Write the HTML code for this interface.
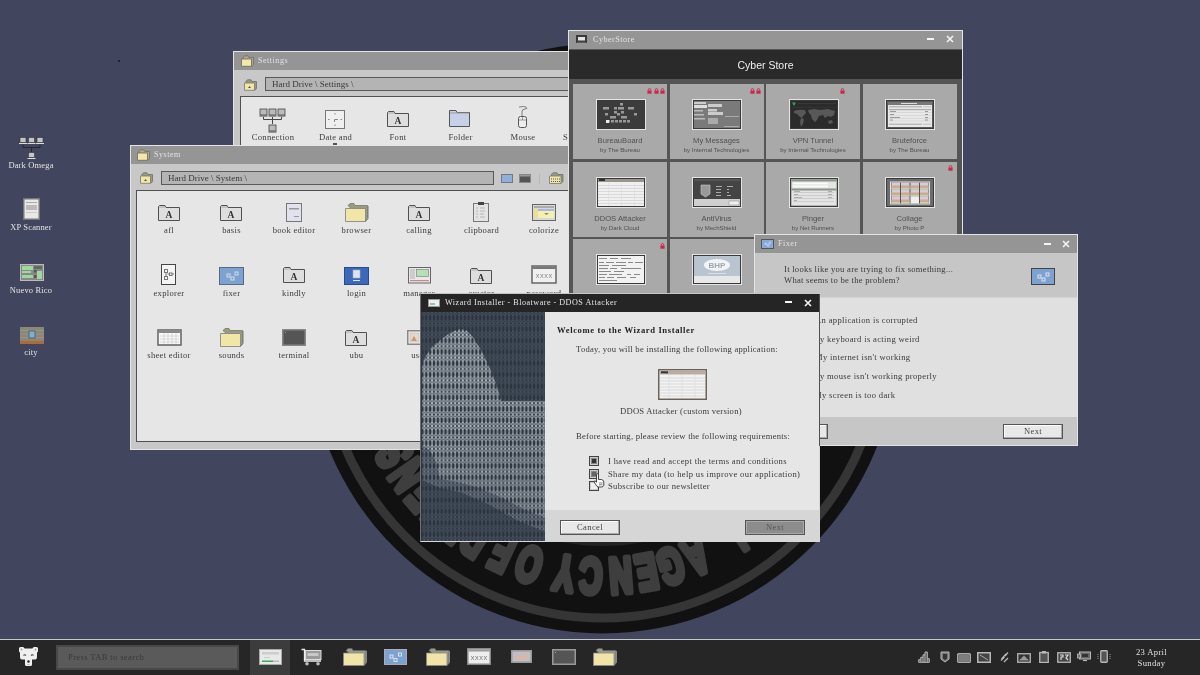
<!DOCTYPE html>
<html><head><meta charset="utf-8">
<style>
*{box-sizing:border-box;margin:0;padding:0}
html,body{width:1200px;height:675px;overflow:hidden}
.win,.abs{will-change:transform}
body{position:relative;background:#42455e;font-family:"Liberation Serif",serif;font-size:8.6px;color:#3a3a3a}
.abs{position:absolute}
.win{position:absolute;background:#c8c8c8;border:1px solid #e4e4e4;overflow:hidden}
.tb{position:absolute;left:0;right:0;top:0;height:18px;background:#959595}
.ttl{position:absolute;top:3px;color:#e2e2e2;font-size:8.1px;letter-spacing:0.5px;line-height:12px;white-space:nowrap}
.content{position:absolute;background:#e6e6e6;border:1px solid #505050}
.path{position:absolute;background:#b4b4b4;border:1px solid #5a5a5a;font-size:9px;color:#3a3a3a;padding-left:6px;line-height:12px}
.lbl{position:absolute;width:80px;text-align:center;font-size:8.6px;color:#3c3c3c;letter-spacing:0.3px;line-height:12px;white-space:nowrap}
.dl{color:#e4e4e4;letter-spacing:0.15px;font-size:8.5px}
.content > svg{margin-left:-1px;margin-top:-1.5px}
.content .lbl{margin-top:-1.5px}
#setc > svg{margin-top:0}
#setc .lbl{margin-top:-0.3px}
.card{position:absolute;width:94px;height:75px;background:#a9a9a9}
.card .t{position:absolute;left:0;right:0;top:51px;line-height:12px;text-align:center;font-family:"Liberation Sans",sans-serif;font-size:7.6px;color:#505050}
.card .s{position:absolute;left:0;right:0;top:61px;line-height:10px;text-align:center;font-family:"Liberation Sans",sans-serif;font-size:6.1px;color:#505050}
.btn{position:absolute;border:1px solid #555;background:#e8e8e8;box-shadow:inset -1px -1px 0 #aaa, inset 1px 1px 0 #fff;text-align:center;line-height:13px;font-size:8.5px;color:#444;letter-spacing:0.4px}
.thumb{position:absolute;left:22.5px;top:15px;width:50px;height:31px;border:1px solid #e4e4e4}
.thumb svg{outline:1px solid #3a3a3a;outline-offset:-1px}
</style></head>
<body>
<!-- logo -->
<svg class="abs" style="left:0;top:0" width="1200" height="675">
  <circle cx="602.5" cy="338.5" r="295" fill="#111"/>
  <circle cx="602.5" cy="338.5" r="279.5" fill="none" stroke="#353535" stroke-width="9"/>
  <circle cx="603" cy="338.5" r="205" fill="none" stroke="#232323" stroke-width="5"/>
  <g style="fill:#3e3e3e;font-family:'Liberation Sans';font-weight:700;font-size:50px;stroke:#3e3e3e;stroke-width:6.5px;stroke-linejoin:round" text-anchor="middle">
<text transform="translate(722.9 523.2) rotate(146.9) scale(0.64 1)">L</text>
<text transform="translate(689.7 541.0) rotate(156.7) scale(0.64 1)">A</text>
<text transform="translate(665.9 549.7) rotate(163.3) scale(0.64 1)">G</text>
<text transform="translate(643.4 555.2) rotate(169.3) scale(0.64 1)">E</text>
<text transform="translate(619.4 558.4) rotate(175.6) scale(0.64 1)">N</text>
<text transform="translate(591.7 558.7) rotate(182.8) scale(0.64 1)">C</text>
<text transform="translate(567.2 556.2) rotate(189.2) scale(0.64 1)">Y</text>
<text transform="translate(534.4 548.2) rotate(198.0) scale(0.64 1)">O</text>
<text transform="translate(509.3 538.3) rotate(205.0) scale(0.64 1)">F</text>
<text transform="translate(484.0 524.5) rotate(212.5) scale(0.64 1)">D</text>
<text transform="translate(466.7 512.3) rotate(218.0) scale(0.64 1)">E</text>
<text transform="translate(451.3 499.0) rotate(223.3) scale(0.64 1)">F</text>
<text transform="translate(436.8 484.0) rotate(228.7) scale(0.64 1)">E</text>
<text transform="translate(422.1 465.3) rotate(234.9) scale(0.64 1)">N</text>
<text transform="translate(409.6 445.4) rotate(241.0) scale(0.64 1)">S</text>
<text transform="translate(399.5 424.7) rotate(247.0) scale(0.64 1)">E</text>
</g>
</svg>

<!-- desktop icons -->
<div class="abs" style="left:118px;top:59.5px;width:1.5px;height:1.5px;background:#222"></div>
<svg class="abs" style="left:19px;top:137px" width="25" height="23"><g fill="#c4c4c4" stroke="#333" stroke-width="0.6"><rect x="1" y="0.5" width="6" height="5"/><rect x="9.5" y="0.5" width="6" height="5"/><rect x="18" y="0.5" width="6" height="5"/><rect x="9.5" y="15.5" width="6" height="5"/></g><path d="M0 6.5H8M8.5 6.5H16.5M17 6.5H25M8.5 21.5H16.5" stroke="#ddd" stroke-width="1"/><path d="M4 7.5V10.5H21V7.5M12.5 10.5V15" stroke="#222" fill="none" stroke-width="0.8"/></svg>
<div class="lbl dl" style="left:-9px;top:159px">Dark Omega</div>
<svg class="abs" style="left:23px;top:198px" width="17" height="22"><rect x="0.75" y="0.75" width="15.5" height="20.5" fill="#e8e8e8" stroke="#777" stroke-width="1.5"/><rect x="3" y="4" width="11" height="1" fill="#aaa"/><rect x="3" y="7" width="11" height="5" fill="#bbb"/><rect x="3" y="14" width="11" height="1" fill="#ccc"/></svg>
<div class="lbl dl" style="left:-9px;top:221px">XP Scanner</div>
<svg class="abs" style="left:20px;top:264px" width="24" height="17"><rect x="0.5" y="0.5" width="23" height="16" fill="#888" stroke="#bbb"/><rect x="2" y="2" width="11" height="4" fill="#9ed89e"/><rect x="2" y="7" width="9" height="2" fill="#9ed89e"/><rect x="2" y="11" width="11" height="3" fill="#9ed89e"/><rect x="14" y="2" width="8" height="3" fill="#666"/><rect x="14" y="6" width="2.5" height="2.5" fill="#555"/><rect x="17" y="7" width="5" height="8" fill="#9ed89e"/><rect x="14" y="11" width="2.5" height="3" fill="#555"/></svg>
<div class="lbl dl" style="left:-9px;top:284px">Nuevo Rico</div>
<svg class="abs" style="left:20px;top:327px" width="24" height="17"><rect width="24" height="14" fill="#8a8878"/><path d="M0 3.5H24M0 7H24M0 10.5H24" stroke="#9a9888" stroke-width="0.8"/><rect y="14" width="24" height="3" fill="#b06a3a"/><rect x="9" y="4" width="6" height="7" fill="#7ab0d8" stroke="#555" stroke-width="0.8"/></svg>
<div class="lbl dl" style="left:-9px;top:346px">city</div>

<!-- Settings window -->
<div class="win" style="left:233px;top:51px;width:400px;height:200px">
  <div class="tb"></div>
  <svg class="abs" style="left:7px;top:3px" width="14" height="12"><path d="M1.5 3 L3.5 0.8 H7 L8 2.5 H12.5 V9.5 L11 11.3 Z" fill="#b0aa88" stroke="#666" stroke-width="0.7"/><path d="M0.5 4 H10.5 V11.3 H0.5 Z" fill="#f4e8a8" stroke="#666" stroke-width="0.8"/></svg>
  <div class="ttl" style="left:24px">Settings</div>
  <svg class="abs" style="left:10px;top:27px" width="14" height="12"><path d="M1.5 3 L3.5 0.8 H7 L8 2.5 H12.5 V9.5 L11 11.3 Z" fill="#9a9a80" stroke="#666" stroke-width="0.7"/><path d="M0.5 4 H10.5 V11.3 H0.5 Z" fill="#f2e6a6" stroke="#777" stroke-width="0.8"/><path d="M4 9 L5.5 7 L7 9Z" fill="#555"/></svg>
  <div class="path" style="left:31px;top:25px;width:360px;height:14px">Hard Drive \ Settings \</div>
  <div class="content" id="setc" style="left:6px;top:44px;width:330px;height:160px"><svg class="abs" style="left:19px;top:11px" width="27" height="25"><g fill="#bbb" stroke="#444" stroke-width="0.8"><rect x="1" y="1" width="7" height="6"/><rect x="10" y="1" width="7" height="6"/><rect x="19" y="1" width="7" height="6"/><rect x="10" y="17" width="7" height="6"/></g><path d="M0.5 8H8.5M9.5 8H17.5M18.5 8H26.5M9.5 24H17.5" stroke="#444"/><path d="M4.5 9V11.5H22.5V9M13.5 9V16" stroke="#444" fill="none"/></svg><svg class="abs" style="left:85px;top:13px" width="20" height="19"><rect x="0.5" y="0.5" width="19" height="18" fill="#f0f0f0" stroke="#777"/><path d="M10 3V4.5M10 14.5V16M3 9.5H4.5M15.5 9.5H17M9.5 9.5V12M9.5 9.5H13" stroke="#888"/></svg><svg class="abs" style="left:147px;top:13px" width="22" height="17"><path d="M0.5 2.5 V16.5 H21.5 V3.5 H8 L7 1.5 H1.5 Z" fill="#dedede" stroke="#505050"/><path d="M1 3 H7.5" stroke="#aaa"/><text x="11" y="13.5" text-anchor="middle" font-family="Liberation Serif" font-weight="bold" font-size="9.5" fill="#333">A</text></svg><svg class="abs" style="left:209px;top:12px" width="21" height="18"><path d="M0.5 1.5 H7 L8 3.5 H20.5 V17.5 H0.5 Z" fill="#c8d0e8" stroke="#555"/><path d="M1 4H20" stroke="#999"/></svg><svg class="abs" style="left:276px;top:9px" width="13" height="22"><path d="M6 10 V6 Q6 3 9 3 Q12 3 10 1 Q8 0 3 1" stroke="#666" fill="none" stroke-width="0.8"/><rect x="2.5" y="10.5" width="8" height="11" rx="2" fill="#eee" stroke="#555"/><path d="M6.5 11V14M3 14H10" stroke="#777" stroke-width="0.7"/></svg><div class="lbl" style="left:-8px;top:34px">Connection</div><div class="lbl" style="left:54.5px;top:34px">Date and</div><div class="lbl" style="left:117px;top:34px">Font</div><div class="lbl" style="left:179.5px;top:34px">Folder</div><div class="lbl" style="left:242px;top:34px">Mouse</div><div class="lbl" style="left:304.5px;top:34px">Screensaver</div><div class="abs" style="left:92px;top:46px;width:4px;height:2px;background:#555"></div></div>
</div>

<!-- System window -->
<div class="win" style="left:130px;top:145px;width:439px;height:305px">
  <div class="tb"></div>
  <svg class="abs" style="left:6px;top:3px" width="14" height="12"><path d="M1.5 3 L3.5 0.8 H7 L8 2.5 H12.5 V9.5 L11 11.3 Z" fill="#b0aa88" stroke="#666" stroke-width="0.7"/><path d="M0.5 4 H10.5 V11.3 H0.5 Z" fill="#f4e8a8" stroke="#666" stroke-width="0.8"/></svg>
  <div class="ttl" style="left:23px">System</div>
  <svg class="abs" style="left:9px;top:26px" width="14" height="12"><path d="M1.5 3 L3.5 0.8 H7 L8 2.5 H12.5 V9.5 L11 11.3 Z" fill="#9a9a80" stroke="#666" stroke-width="0.7"/><path d="M0.5 4 H10.5 V11.3 H0.5 Z" fill="#f2e6a6" stroke="#777" stroke-width="0.8"/><path d="M4 9 L5.5 7 L7 9Z" fill="#555"/></svg>
  <div class="path" style="left:30px;top:25px;width:333px;height:14px">Hard Drive \ System \</div>
  <svg class="abs" style="left:369.5px;top:27.5px" width="12" height="9"><rect x="0.5" y="0.5" width="11" height="8" fill="#8fb0dc" stroke="#777"/></svg>
  <svg class="abs" style="left:388px;top:27.5px" width="12" height="9"><rect x="0.5" y="0.5" width="11" height="8" fill="#555" stroke="#888"/><rect x="1" y="1" width="10" height="1.5" fill="#999"/></svg>
  <div class="abs" style="left:408px;top:28px;width:1px;height:10px;background:#b8b8b8"></div>
  <svg class="abs" style="left:418px;top:26px" width="15" height="12"><path d="M2 3 L4 0.8 H8 L9 2.5 H14 V9.5 L12 11.5 Z" fill="#9a9a80" stroke="#666" stroke-width="0.7"/><path d="M0.5 4 H12 V11.5 H0.5 Z" fill="#f2e6a6" stroke="#777" stroke-width="0.8"/><path d="M2 7H11M2 9.5H11" stroke="#555" stroke-dasharray="1 1"/></svg>
  <div class="content" style="left:5px;top:44px;width:440px;height:252px"><svg class="abs" style="left:22px;top:14px" width="22" height="17"><path d="M0.5 2.5 V16.5 H21.5 V3.5 H8 L7 1.5 H1.5 Z" fill="#dedede" stroke="#505050"/><path d="M1 3 H7.5" stroke="#aaa"/><text x="11" y="13.5" text-anchor="middle" font-family="Liberation Serif" font-weight="bold" font-size="9.5" fill="#333">A</text></svg><svg class="abs" style="left:84px;top:14px" width="22" height="17"><path d="M0.5 2.5 V16.5 H21.5 V3.5 H8 L7 1.5 H1.5 Z" fill="#dedede" stroke="#505050"/><path d="M1 3 H7.5" stroke="#aaa"/><text x="11" y="13.5" text-anchor="middle" font-family="Liberation Serif" font-weight="bold" font-size="9.5" fill="#333">A</text></svg><svg class="abs" style="left:150px;top:13px" width="16" height="19"><rect x="0.5" y="0.5" width="15" height="18" fill="#e2e2ee" stroke="#777"/><rect x="3" y="5" width="10" height="1.5" fill="#999"/><rect x="8" y="13" width="5" height="1" fill="#999"/></svg><svg class="abs" style="left:209px;top:13px" width="24" height="19"><path d="M3 2.5 L5 0.5 H9 L10 2.5 H22.5 V15 L20 18.5 Z" fill="#9a9a80" stroke="#777" stroke-width="0.8"/><path d="M0.5 5.5 H20.5 V18.5 H0.5 Z" fill="#f2e6a6" stroke="#888" stroke-width="0.9"/><path d="M20.5 18.5 L23 15.5 V3" stroke="#777" fill="none"/></svg><svg class="abs" style="left:272px;top:14px" width="22" height="17"><path d="M0.5 2.5 V16.5 H21.5 V3.5 H8 L7 1.5 H1.5 Z" fill="#dedede" stroke="#505050"/><path d="M1 3 H7.5" stroke="#aaa"/><text x="11" y="13.5" text-anchor="middle" font-family="Liberation Serif" font-weight="bold" font-size="9.5" fill="#333">A</text></svg><svg class="abs" style="left:337px;top:12px" width="17" height="20"><rect x="0.5" y="1.5" width="15" height="18" fill="#e4e4e4" stroke="#777"/><rect x="5" y="0" width="6" height="3" fill="#444"/><path d="M3 6H5M7 6H12M3 9H5M7 9H12M3 12H5M7 12H11M3 15H5M7 15H12" stroke="#aaa" stroke-width="0.8"/></svg><svg class="abs" style="left:396px;top:14px" width="24" height="17"><rect x="0.5" y="0.5" width="23" height="16" fill="#d8d8d8" stroke="#666"/><rect x="2" y="2" width="20" height="2" fill="#aaa"/><rect x="2" y="5" width="3" height="9" fill="#f0e080"/><rect x="6" y="5" width="16" height="9" fill="#f4f0b0"/><rect x="6" y="5" width="16" height="2" fill="#a8b8e0"/><path d="M12 9 H17 L14.5 11 Z" fill="#888"/></svg><svg class="abs" style="left:25px;top:74px" width="16" height="22"><rect x="0.5" y="0.5" width="14" height="20" fill="#f4f4f4" stroke="#444"/><rect x="3.5" y="5.5" width="3" height="3" fill="none" stroke="#777"/><rect x="3.5" y="12.5" width="3" height="3" fill="none" stroke="#777"/><rect x="8.5" y="9" width="2.5" height="2.5" fill="none" stroke="#777"/><path d="M5 8.5 V12.5 M6.5 10 H8.5 M11 10 H13" stroke="#777"/></svg><svg class="abs" style="left:83px;top:77px" width="25" height="18"><rect x="0.5" y="0.5" width="24" height="17" fill="#7ea2d0" stroke="#5a6a80"/><rect x="8" y="7" width="3" height="3" fill="none" stroke="#dde" stroke-width="0.9"/><rect x="12" y="10" width="3" height="3" fill="none" stroke="#dde" stroke-width="0.9"/><rect x="16" y="5" width="3" height="3" fill="none" stroke="#dde" stroke-width="0.9"/></svg><svg class="abs" style="left:147px;top:76px" width="22" height="17"><path d="M0.5 2.5 V16.5 H21.5 V3.5 H8 L7 1.5 H1.5 Z" fill="#dedede" stroke="#505050"/><path d="M1 3 H7.5" stroke="#aaa"/><text x="11" y="13.5" text-anchor="middle" font-family="Liberation Serif" font-weight="bold" font-size="9.5" fill="#333">A</text></svg><svg class="abs" style="left:208px;top:77px" width="25" height="18"><rect x="0.5" y="0.5" width="24" height="17" fill="#3c68bc" stroke="#2a4a88"/><rect x="9" y="3" width="7" height="8" fill="#dde3ee" stroke="#aab" stroke-width="0.6"/><rect x="9" y="13" width="7" height="1" fill="#dde3ee"/></svg><svg class="abs" style="left:272px;top:77px" width="23" height="17"><rect x="0.5" y="0.5" width="22" height="15.5" fill="#e8e8e8" stroke="#666"/><rect x="2" y="2" width="5" height="10" fill="#ccc"/><rect x="8.5" y="2.5" width="12" height="7" fill="#b8e0b8" stroke="#777" stroke-width="0.6"/><rect x="2" y="13" width="19" height="1.2" fill="#c88"/></svg><svg class="abs" style="left:334px;top:77px" width="22" height="17"><path d="M0.5 2.5 V16.5 H21.5 V3.5 H8 L7 1.5 H1.5 Z" fill="#dedede" stroke="#505050"/><path d="M1 3 H7.5" stroke="#aaa"/><text x="11" y="13.5" text-anchor="middle" font-family="Liberation Serif" font-weight="bold" font-size="9.5" fill="#333">A</text></svg><svg class="abs" style="left:395px;top:75px" width="26" height="19"><rect x="1" y="1" width="24" height="17" fill="#f0f0f0" stroke="#666" stroke-width="1.5"/><rect x="1.5" y="1.5" width="23" height="2.5" fill="#777"/><text x="13" y="13" text-anchor="middle" font-family="Liberation Mono" font-size="7" fill="#888">xxxx</text></svg><svg class="abs" style="left:21px;top:139px" width="25" height="17"><rect x="1" y="1" width="23" height="15" fill="#f8f8f8" stroke="#6a6a6a" stroke-width="1.6"/><rect x="1.5" y="1.5" width="22" height="2.5" fill="#888"/><path d="M3 7H22M3 10H22M3 13H22M7 4V15M11 4V15M15 4V15M19 4V15" stroke="#ccc" stroke-width="0.7"/></svg><svg class="abs" style="left:84px;top:138px" width="24" height="19"><path d="M3 2.5 L5 0.5 H9 L10 2.5 H22.5 V15 L20 18.5 Z" fill="#9a9a80" stroke="#777" stroke-width="0.8"/><path d="M0.5 5.5 H20.5 V18.5 H0.5 Z" fill="#f2e6a6" stroke="#888" stroke-width="0.9"/><path d="M20.5 18.5 L23 15.5 V3" stroke="#777" fill="none"/></svg><svg class="abs" style="left:146px;top:139px" width="24" height="17"><rect x="0.75" y="0.75" width="22.5" height="15.5" fill="#555" stroke="#888" stroke-width="1.5"/><rect x="3" y="3" width="1" height="1" fill="#999"/></svg><svg class="abs" style="left:209px;top:139px" width="22" height="17"><path d="M0.5 2.5 V16.5 H21.5 V3.5 H8 L7 1.5 H1.5 Z" fill="#dedede" stroke="#505050"/><path d="M1 3 H7.5" stroke="#aaa"/><text x="11" y="13.5" text-anchor="middle" font-family="Liberation Serif" font-weight="bold" font-size="9.5" fill="#333">A</text></svg><svg class="abs" style="left:271px;top:140px" width="22" height="15"><rect x="0.75" y="0.75" width="20.5" height="13.5" fill="#f0f0f0" stroke="#888" stroke-width="1.5"/><rect x="3" y="3" width="9" height="9" fill="#e4d8cc" stroke="#bbb" stroke-width="0.6"/><path d="M4 11L7 6L10 11Z" fill="#d09870"/></svg><div class="lbl" style="left:-8px;top:34.5px">afl</div><div class="lbl" style="left:54.5px;top:34.5px">basis</div><div class="lbl" style="left:117px;top:34.5px">book editor</div><div class="lbl" style="left:179.5px;top:34.5px">browser</div><div class="lbl" style="left:242px;top:34.5px">calling</div><div class="lbl" style="left:304.5px;top:34.5px">clipboard</div><div class="lbl" style="left:367px;top:34.5px">colorize</div><div class="lbl" style="left:-8px;top:97px">explorer</div><div class="lbl" style="left:54.5px;top:97px">fixer</div><div class="lbl" style="left:117px;top:97px">kindly</div><div class="lbl" style="left:179.5px;top:97px">login</div><div class="lbl" style="left:242px;top:97px">manager</div><div class="lbl" style="left:304.5px;top:97px">creator</div><div class="lbl" style="left:367px;top:97px">password</div><div class="lbl" style="left:-8px;top:159.5px">sheet editor</div><div class="lbl" style="left:54.5px;top:159.5px">sounds</div><div class="lbl" style="left:117px;top:159.5px">terminal</div><div class="lbl" style="left:179.5px;top:159.5px">ubu</div><div class="lbl" style="left:242px;top:159.5px">user</div></div>
</div>

<!-- CyberStore -->
<div class="win" style="left:568px;top:30px;width:395px;height:300px;background:#555">
  <div class="tb"></div>
  <svg class="abs" style="left:7px;top:4px" width="11" height="8"><rect x="0" y="0" width="11" height="8" fill="#3a3a3a"/><rect x="2" y="2" width="7" height="3.5" fill="#e4e4e4"/><rect x="1" y="6.8" width="9" height="1" fill="#666"/></svg>
  <div class="ttl" style="left:24px">CyberStore</div>
  <div class="abs" style="left:358px;top:7px;width:7px;height:2px;background:#f4f4f4"></div>
  <svg class="abs" style="left:377px;top:4px" width="8" height="8"><path d="M1 1L7 7M7 1L1 7" stroke="#f4f4f4" stroke-width="1.6"/></svg>
  <div class="abs" style="left:0;right:0;top:19px;height:29px;background:#2a2a2a;color:#eee;font-family:'Liberation Sans',sans-serif;font-size:10.5px;text-align:center;line-height:31px">Cyber Store</div>
  <div class="card" style="left:4px;top:53px"><svg class="abs" style="left:74px;top:3.5px" width="5" height="6"><path d="M1.3 2.6V1.8Q1.3 0.5 2.5 0.5Q3.7 0.5 3.7 1.8V2.6" stroke="#c8284e" stroke-width="0.9" fill="none"/><rect x="0.4" y="2.5" width="4.2" height="3.2" fill="#c8284e"/></svg><svg class="abs" style="left:81px;top:3.5px" width="5" height="6"><path d="M1.3 2.6V1.8Q1.3 0.5 2.5 0.5Q3.7 0.5 3.7 1.8V2.6" stroke="#c8284e" stroke-width="0.9" fill="none"/><rect x="0.4" y="2.5" width="4.2" height="3.2" fill="#c8284e"/></svg><svg class="abs" style="left:87px;top:3.5px" width="5" height="6"><path d="M1.3 2.6V1.8Q1.3 0.5 2.5 0.5Q3.7 0.5 3.7 1.8V2.6" stroke="#c8284e" stroke-width="0.9" fill="none"/><rect x="0.4" y="2.5" width="4.2" height="3.2" fill="#c8284e"/></svg><div class="thumb"><svg width="48" height="29" style="display:block;background:#3c3c3c"><rect x="0.5" y="0.5" width="47" height="28" fill="#3c3c3c" stroke="#888"/><rect x="23" y="3" width="3" height="2.5" fill="#999"/><rect x="6" y="7" width="3" height="2.5" fill="#999"/><rect x="9" y="7" width="3" height="2.5" fill="#999"/><rect x="17" y="7" width="3" height="2.5" fill="#999"/><rect x="21" y="7" width="3" height="2.5" fill="#999"/><rect x="24" y="7" width="3" height="2.5" fill="#999"/><rect x="31" y="7" width="3" height="2.5" fill="#999"/><rect x="34" y="7" width="3" height="2.5" fill="#999"/><rect x="17" y="11" width="3" height="2.5" fill="#999"/><rect x="24" y="11" width="3" height="2.5" fill="#999"/><rect x="8" y="13" width="3" height="2.5" fill="#999"/><rect x="20" y="13" width="3" height="2.5" fill="#999"/><rect x="37" y="13" width="3" height="2.5" fill="#999"/><rect x="13" y="16" width="3" height="2.5" fill="#999"/><rect x="16" y="16" width="3" height="2.5" fill="#999"/><rect x="24" y="16" width="3" height="2.5" fill="#999"/><rect x="27" y="16" width="3" height="2.5" fill="#999"/><rect x="10" y="20" width="3" height="2.5" fill="#999"/><rect x="14" y="20" width="3" height="2.5" fill="#999"/><rect x="18" y="20" width="3" height="2.5" fill="#999"/><rect x="22" y="20" width="3" height="2.5" fill="#999"/><rect x="26" y="20" width="3" height="2.5" fill="#999"/><rect x="30" y="20" width="3" height="2.5" fill="#999"/><rect x="9" y="20" width="3" height="3" fill="#eee"/></svg></div><div class="t">BureauBoard</div><div class="s">by The Bureau</div></div><div class="card" style="left:100.5px;top:53px"><svg class="abs" style="left:80.5px;top:3.5px" width="5" height="6"><path d="M1.3 2.6V1.8Q1.3 0.5 2.5 0.5Q3.7 0.5 3.7 1.8V2.6" stroke="#c8284e" stroke-width="0.9" fill="none"/><rect x="0.4" y="2.5" width="4.2" height="3.2" fill="#c8284e"/></svg><svg class="abs" style="left:86.5px;top:3.5px" width="5" height="6"><path d="M1.3 2.6V1.8Q1.3 0.5 2.5 0.5Q3.7 0.5 3.7 1.8V2.6" stroke="#c8284e" stroke-width="0.9" fill="none"/><rect x="0.4" y="2.5" width="4.2" height="3.2" fill="#c8284e"/></svg><div class="thumb"><svg width="48" height="29" style="display:block;background:#7a7a7a"><rect x="0" y="0" width="48" height="29" fill="#7a7a7a"/><rect x="1" y="2" width="12" height="2" fill="#ccc"/><rect x="1" y="5" width="13" height="3" fill="#ddd"/><rect x="1" y="10" width="9" height="1.5" fill="#bbb"/><rect x="1" y="14" width="10" height="1.5" fill="#bbb"/><rect x="1" y="18" width="11" height="1.5" fill="#bbb"/><rect x="15" y="4" width="14" height="3" fill="#ccc"/><rect x="15" y="9" width="9" height="2.5" fill="#ccc"/><rect x="15" y="12" width="15" height="3" fill="#ccc"/><rect x="15" y="18" width="10" height="6" fill="#aaa"/><rect x="32" y="16" width="14" height="1" fill="#aaa"/><rect x="31" y="26" width="15" height="1" fill="#aaa"/></svg></div><div class="t">My Messages</div><div class="s">by Internal Technologies</div></div><div class="card" style="left:197px;top:53px"><svg class="abs" style="left:74px;top:3.5px" width="5" height="6"><path d="M1.3 2.6V1.8Q1.3 0.5 2.5 0.5Q3.7 0.5 3.7 1.8V2.6" stroke="#c8284e" stroke-width="0.9" fill="none"/><rect x="0.4" y="2.5" width="4.2" height="3.2" fill="#c8284e"/></svg><div class="thumb"><svg width="48" height="29" style="display:block;background:#2d2d2d"><defs><pattern id="dots" width="1.2" height="1.2" patternUnits="userSpaceOnUse"><rect width="0.8" height="0.8" fill="#6a6a6a"/></pattern></defs><rect width="48" height="29" fill="#2b2b2b"/><path d="M2 2.5 H6 L4 6 Z" fill="#3aa05a"/><rect x="8" y="3" width="38" height="0.6" fill="#444"/><rect x="2" y="7" width="44" height="0.6" fill="#3a3a3a"/><path d="M4 11 Q9 9 15 10 L16 13 L13 16 L12 18 L10 17 L7 14 L4 13 Z M11 18 L14 19 L13 24 L11 27 L10 22 Z M18 10 L24 9 L30 10 L38 9 L45 11 L44 15 L41 17 L38 16 L35 18 L33 15 L29 16 L27 20 L25 22 L22 19 L21 15 L19 13 Z M38 21 L42 20 L43 23 L39 24 Z" fill="#585858"/></svg></div><div class="t">VPN Tunnel</div><div class="s">by Internal Technologies</div></div><div class="card" style="left:293.5px;top:53px"><div class="thumb"><svg width="48" height="29" style="display:block;background:#555"><rect width="48" height="29" fill="#5a5a5a"/><rect x="2" y="2" width="44" height="25" fill="#e8e8e8"/><rect x="2" y="2" width="44" height="3" fill="#777"/><rect x="15" y="3" width="16" height="1" fill="#ddd"/><rect x="3" y="6" width="33" height="1.5" fill="#bbb"/><rect x="37" y="6" width="8" height="1.5" fill="#ccc"/><rect x="3" y="9" width="42" height="1.2" fill="#aaa"/><path d="M3 12.5H45M3 15.5H45M3 18.5H45M3 21H45" stroke="#ccc" stroke-width="0.6"/><path d="M4 11.5H10M4 14.5H8M4 17.5H14M4 20H7M39 11.5H42M39 14.5H42M39 17.5H42M39 20H42" stroke="#777" stroke-width="0.7"/><rect x="3" y="23.5" width="33" height="1.5" fill="#bbb"/><rect x="37" y="23.5" width="8" height="1.5" fill="#ccc"/></svg></div><div class="t">Bruteforce</div><div class="s">by The Bureau</div></div><div class="card" style="left:4px;top:130.8px"><div class="thumb"><svg width="48" height="29" style="display:block;background:#f0f0f0"><rect width="48" height="29" fill="#f0f0f0"/><rect width="48" height="4" fill="#9a948a"/><rect x="2" y="1" width="6" height="2" fill="#333"/><rect x="1" y="7" width="46" height="0.7" fill="#cfcfcf"/><rect x="1" y="10" width="46" height="0.7" fill="#cfcfcf"/><rect x="1" y="13" width="46" height="0.7" fill="#cfcfcf"/><rect x="1" y="16" width="46" height="0.7" fill="#cfcfcf"/><rect x="1" y="19" width="46" height="0.7" fill="#cfcfcf"/><rect x="1" y="22" width="46" height="0.7" fill="#cfcfcf"/><rect x="1" y="25" width="46" height="0.7" fill="#cfcfcf"/><rect x="11" y="5" width="0.7" height="23" fill="#ddd"/><rect x="24" y="5" width="0.7" height="23" fill="#ddd"/><rect x="37" y="5" width="0.7" height="23" fill="#ddd"/></svg></div><div class="t">DDOS Attacker</div><div class="s">by Dark Cloud</div></div><div class="card" style="left:100.5px;top:130.8px"><div class="thumb"><svg width="48" height="29" style="display:block;background:#444"><rect width="48" height="29" fill="#444"/><rect width="48" height="3" fill="#555"/><rect y="21" width="48" height="8" fill="#cfcfcf"/><rect x="36" y="23" width="10" height="4" fill="#eee" stroke="#888" stroke-width="0.5"/><path d="M8 7 H17 V16 L12.5 19 L8 16 Z" fill="#999" stroke="#ccc" stroke-width="0.6"/><rect x="23" y="8" width="6" height="1" fill="#aaa"/><rect x="23" y="11" width="5" height="1" fill="#aaa"/><rect x="23" y="14" width="5" height="1" fill="#aaa"/><rect x="23" y="17" width="5" height="1" fill="#aaa"/><rect x="34" y="8" width="6" height="1" fill="#aaa"/><rect x="34" y="11" width="2" height="1" fill="#aaa"/><rect x="34" y="14" width="2" height="1" fill="#aaa"/><rect x="34" y="17" width="4" height="1" fill="#aaa"/></svg></div><div class="t">AntiVirus</div><div class="s">by MechShield</div></div><div class="card" style="left:197px;top:130.8px"><div class="thumb"><svg width="48" height="29" style="display:block;background:#7a8a7a"><rect width="48" height="29" fill="#7f8c7f"/><rect x="1.5" y="1.5" width="45" height="26" fill="#e4e4e4"/><rect x="1.5" y="1.5" width="45" height="2" fill="#889588"/><rect x="3" y="4.5" width="35" height="1.8" fill="#fafafa"/><rect x="3" y="7.5" width="35" height="1.8" fill="#fafafa"/><rect x="1.5" y="10.5" width="45" height="2" fill="#889588"/><path d="M3 14.5H44M3 17.5H44M3 20.5H44M3 23.5H44" stroke="#bbb" stroke-width="0.6"/><path d="M4 13.5H10M4 16.5H8M4 19.5H12M4 22.5H7M38 13.5H42M38 16.5H42M38 19.5H42" stroke="#888" stroke-width="0.6"/></svg></div><div class="t">Pinger</div><div class="s">by Net Runners</div></div><div class="card" style="left:293.5px;top:130.8px"><svg class="abs" style="left:85.5px;top:3.5px" width="5" height="6"><path d="M1.3 2.6V1.8Q1.3 0.5 2.5 0.5Q3.7 0.5 3.7 1.8V2.6" stroke="#c8284e" stroke-width="0.9" fill="none"/><rect x="0.4" y="2.5" width="4.2" height="3.2" fill="#c8284e"/></svg><div class="thumb"><svg width="48" height="29" style="display:block;background:#6a6a6a"><rect width="48" height="29" fill="#6c6c6c"/><rect x="4" y="3.5" width="40" height="23" fill="#e0e0e0"/><rect x="5" y="4.5" width="38" height="21" fill="#555"/><rect x="5.5" y="4.5" width="8.5" height="7" fill="#d4ccd8"/><rect x="5.5" y="7.5" width="8.5" height="2.5" fill="#d0a890"/><rect x="5.5" y="10.0" width="8.5" height="1.5" fill="#c8d0b0"/><rect x="15" y="4.5" width="8.5" height="7" fill="#d4ccd8"/><rect x="15" y="7.5" width="8.5" height="2.5" fill="#d0a890"/><rect x="15" y="10.0" width="8.5" height="1.5" fill="#c8d0b0"/><rect x="24.5" y="4.5" width="8.5" height="7" fill="#d4ccd8"/><rect x="24.5" y="7.5" width="8.5" height="2.5" fill="#d0a890"/><rect x="24.5" y="10.0" width="8.5" height="1.5" fill="#c8d0b0"/><rect x="34" y="4.5" width="8.5" height="7" fill="#d4ccd8"/><rect x="34" y="7.5" width="8.5" height="2.5" fill="#d0a890"/><rect x="34" y="10.0" width="8.5" height="1.5" fill="#c8d0b0"/><rect x="5.5" y="11.5" width="8.5" height="7" fill="#d4ccd8"/><rect x="5.5" y="14.5" width="8.5" height="2.5" fill="#d0a890"/><rect x="5.5" y="17.0" width="8.5" height="1.5" fill="#c8d0b0"/><rect x="15" y="11.5" width="8.5" height="7" fill="#d4ccd8"/><rect x="15" y="14.5" width="8.5" height="2.5" fill="#d0a890"/><rect x="15" y="17.0" width="8.5" height="1.5" fill="#c8d0b0"/><rect x="24.5" y="11.5" width="8.5" height="7" fill="#d4ccd8"/><rect x="24.5" y="14.5" width="8.5" height="2.5" fill="#d0a890"/><rect x="24.5" y="17.0" width="8.5" height="1.5" fill="#c8d0b0"/><rect x="34" y="11.5" width="8.5" height="7" fill="#d4ccd8"/><rect x="34" y="14.5" width="8.5" height="2.5" fill="#d0a890"/><rect x="34" y="17.0" width="8.5" height="1.5" fill="#c8d0b0"/><rect x="5.5" y="18.5" width="8.5" height="7" fill="#d4ccd8"/><rect x="5.5" y="21.5" width="8.5" height="2.5" fill="#d0a890"/><rect x="5.5" y="24.0" width="8.5" height="1.5" fill="#c8d0b0"/><rect x="15" y="18.5" width="8.5" height="7" fill="#d4ccd8"/><rect x="15" y="21.5" width="8.5" height="2.5" fill="#d0a890"/><rect x="15" y="24.0" width="8.5" height="1.5" fill="#c8d0b0"/><rect x="24.5" y="18.5" width="8.5" height="7" fill="#eeeeee"/><rect x="34" y="18.5" width="8.5" height="7" fill="#d4ccd8"/><rect x="34" y="21.5" width="8.5" height="2.5" fill="#d0a890"/><rect x="34" y="24.0" width="8.5" height="1.5" fill="#c8d0b0"/></svg></div><div class="t">Collage</div><div class="s">by Photo P</div></div><div class="card" style="left:4px;top:208px"><svg class="abs" style="left:87px;top:3.5px" width="5" height="6"><path d="M1.3 2.6V1.8Q1.3 0.5 2.5 0.5Q3.7 0.5 3.7 1.8V2.6" stroke="#c8284e" stroke-width="0.9" fill="none"/><rect x="0.4" y="2.5" width="4.2" height="3.2" fill="#c8284e"/></svg><div class="thumb"><svg width="48" height="29" style="display:block;background:#f2f2f2"><rect width="48" height="29" fill="#f2f2f2"/><rect x="2" y="3" width="8" height="1" fill="#8a8a8a"/><rect x="13" y="3" width="8" height="1" fill="#8a8a8a"/><rect x="24" y="3" width="10" height="1" fill="#8a8a8a"/><rect x="2" y="7" width="5" height="1" fill="#8a8a8a"/><rect x="9" y="7" width="8" height="1" fill="#8a8a8a"/><rect x="19" y="7" width="10" height="1" fill="#8a8a8a"/><rect x="31" y="7" width="5" height="1" fill="#8a8a8a"/><rect x="38" y="7" width="8" height="1" fill="#8a8a8a"/><rect x="2" y="10" width="10" height="1" fill="#8a8a8a"/><rect x="15" y="10" width="14" height="1" fill="#8a8a8a"/><rect x="2" y="13" width="9" height="1" fill="#8a8a8a"/><rect x="13" y="13" width="7" height="1" fill="#8a8a8a"/><rect x="24" y="13" width="20" height="1" fill="#8a8a8a"/><rect x="2" y="16" width="12" height="1" fill="#8a8a8a"/><rect x="17" y="16" width="10" height="1" fill="#8a8a8a"/><rect x="2" y="19" width="8" height="1" fill="#8a8a8a"/><rect x="12" y="19" width="13" height="1" fill="#8a8a8a"/><rect x="30" y="19" width="4" height="1" fill="#8a8a8a"/><rect x="37" y="19" width="6" height="1" fill="#8a8a8a"/><rect x="2" y="22" width="6" height="1" fill="#8a8a8a"/><rect x="10" y="22" width="7" height="1" fill="#8a8a8a"/><rect x="20" y="22" width="9" height="1" fill="#8a8a8a"/><rect x="33" y="22" width="6" height="1" fill="#8a8a8a"/><rect x="2" y="25" width="18" height="1" fill="#8a8a8a"/></svg></div><div class="t"></div><div class="s"></div></div><div class="card" style="left:100.5px;top:208px"><div class="thumb"><svg width="48" height="29" style="display:block;background:#b8c4d0"><rect width="48" height="29" fill="#b8c4d0"/><rect y="21" width="48" height="8" fill="#e8e8e8"/><ellipse cx="24" cy="10" rx="13" ry="6" fill="#f4f4f4"/><text x="24" y="13" font-size="8" text-anchor="middle" fill="#98a8b8" font-family="Liberation Sans" font-weight="bold">BHP</text><rect x="15" y="18" width="18" height="1" fill="#ddd"/></svg></div><div class="t"></div><div class="s"></div></div><div class="card" style="left:197px;top:208px"><div class="thumb"></div><div class="t"></div><div class="s"></div></div><div class="card" style="left:293.5px;top:208px"><div class="thumb"></div><div class="t"></div><div class="s"></div></div>
</div>

<!-- Fixer -->
<div class="win" style="left:754px;top:234px;width:324px;height:212px">
  <div class="tb"></div>
  <svg class="abs" style="left:6px;top:4px" width="13" height="10"><rect x="0.5" y="0.5" width="12" height="9" fill="#88aad6" stroke="#555"/><path d="M4 4h1.5v1.5h-1.5zM6.5 5.5h1.5v1.5h-1.5zM8 3h1.5v1.5h-1.5z" fill="none" stroke="#dde" stroke-width="0.6"/></svg>
  <div class="ttl" style="left:23px">Fixer</div>
  <div class="abs" style="left:289px;top:8px;width:7px;height:2px;background:#f4f4f4"></div>
  <svg class="abs" style="left:307px;top:5px" width="8" height="8"><path d="M1 1L7 7M7 1L1 7" stroke="#f4f4f4" stroke-width="1.6"/></svg>
  <div class="abs" style="left:0;right:0;top:19px;height:43px;background:#c6c6c6"></div>
  <div class="abs" style="left:29.4px;top:27.5px;white-space:nowrap;line-height:12px;font-size:8.6px;letter-spacing:0.267px;">It looks like you are trying to fix something...</div>
  <div class="abs" style="left:29.4px;top:39.0px;white-space:nowrap;line-height:12px;font-size:8.6px;letter-spacing:0.265px;">What seems to be the problem?</div>
  <svg class="abs" style="left:276px;top:33px" width="24" height="17"><rect x="0.5" y="0.5" width="23" height="16" fill="#7ea2d0" stroke="#444"/><rect x="7" y="7" width="3" height="3" fill="none" stroke="#e4e8f0" stroke-width="0.9"/><rect x="11" y="10" width="3" height="3" fill="none" stroke="#e4e8f0" stroke-width="0.9"/><rect x="15" y="5" width="3" height="3" fill="none" stroke="#e4e8f0" stroke-width="0.9"/></svg>
  <div class="abs" style="left:0;right:0;top:62px;height:120px;background:#e0e0e0;border-top:1px solid #d4d4d4"></div>
  <div class="abs" style="left:42px;top:79.60000000000002px;width:10px;height:10px;border:1px solid #555;background:#eee;border-radius:50%"></div><div class="abs" style="left:42px;top:98.60000000000002px;width:10px;height:10px;border:1px solid #555;background:#eee;border-radius:50%"></div><div class="abs" style="left:42px;top:117px;width:10px;height:10px;border:1px solid #555;background:#eee;border-radius:50%"></div><div class="abs" style="left:42px;top:135.8px;width:10px;height:10px;border:1px solid #555;background:#eee;border-radius:50%"></div><div class="abs" style="left:42px;top:154.5px;width:10px;height:10px;border:1px solid #555;background:#eee;border-radius:50%"></div>
  <div class="abs" style="left:60.0px;top:78.6px;white-space:nowrap;line-height:12px;font-size:8.6px;letter-spacing:0.330px;">An application is corrupted</div><div class="abs" style="left:56.8px;top:97.6px;white-space:nowrap;line-height:12px;font-size:8.6px;letter-spacing:0.330px;">My keyboard is acting weird</div><div class="abs" style="left:59.8px;top:116.0px;white-space:nowrap;line-height:12px;font-size:8.6px;letter-spacing:0.330px;">My internet isn't working</div><div class="abs" style="left:56.7px;top:134.8px;white-space:nowrap;line-height:12px;font-size:8.6px;letter-spacing:0.330px;">My mouse isn't working properly</div><div class="abs" style="left:58.8px;top:153.5px;white-space:nowrap;line-height:12px;font-size:8.6px;letter-spacing:0.330px;">My screen is too dark</div>
  <div class="abs" style="left:0;right:0;top:182px;bottom:0;background:#c6c6c6"></div>
  <div class="btn" style="left:15px;top:189px;width:58px;height:15px">Back</div>
  <div class="btn" style="left:248px;top:189px;width:60px;height:15px">Next</div>
</div>

<!-- Wizard -->
<div class="win" style="left:420px;top:293px;width:400px;height:249px;background:#e6e6e6;border-color:#c4c4c4 #d8d8d8 #d8d8d8 #707070">
  <div class="tb" style="background:#252525;height:18px"></div>
  <svg class="abs" style="left:7px;top:5px" width="12" height="8"><rect x="0.5" y="0.5" width="11" height="7" fill="#eee" stroke="#999"/><rect x="2" y="4.5" width="5" height="1" fill="#3a3"/></svg>
  <div class="ttl" style="left:24px;top:3px;color:#e6e6e6">Wizard Installer - Bloatware - DDOS Attacker</div>
  <div class="abs" style="left:364px;top:7px;width:7px;height:2px;background:#f4f4f4"></div>
  <svg class="abs" style="left:383px;top:5px" width="8" height="8"><path d="M1 1L7 7M7 1L1 7" stroke="#f4f4f4" stroke-width="1.6"/></svg>
  <div id="wizpanel" class="abs" style="left:0px;top:18px;width:124px;height:229px;background:#2f3946;overflow:hidden"><svg width="124" height="229" style="display:block;margin-left:1px">
<defs><pattern id="pd" width="3.85" height="22.799999999999997" patternUnits="userSpaceOnUse" x="0.4" y="0"><rect width="3.85" height="22.799999999999997" fill="#2b333e"/><ellipse cx="1.9" cy="1.90" rx="1.1" ry="1.75" fill="none" stroke="#4c5865" stroke-width="0.95"/><rect x="1.5" y="3.80" width="0.95" height="3.8" fill="#4c5865"/><ellipse cx="1.9" cy="9.50" rx="1.1" ry="1.75" fill="none" stroke="#4c5865" stroke-width="0.95"/><ellipse cx="1.9" cy="13.30" rx="1.1" ry="1.75" fill="none" stroke="#4c5865" stroke-width="0.95"/><rect x="1.5" y="15.20" width="0.95" height="3.8" fill="#4c5865"/><ellipse cx="1.9" cy="20.90" rx="1.1" ry="1.75" fill="none" stroke="#4c5865" stroke-width="0.95"/></pattern><pattern id="pm" width="3.85" height="22.799999999999997" patternUnits="userSpaceOnUse" x="0.4" y="0"><rect width="3.85" height="22.799999999999997" fill="#2b333e"/><ellipse cx="1.9" cy="1.90" rx="1.1" ry="1.75" fill="none" stroke="#7e8996" stroke-width="0.95"/><rect x="1.5" y="3.80" width="0.95" height="3.8" fill="#7e8996"/><ellipse cx="1.9" cy="9.50" rx="1.1" ry="1.75" fill="none" stroke="#7e8996" stroke-width="0.95"/><ellipse cx="1.9" cy="13.30" rx="1.1" ry="1.75" fill="none" stroke="#7e8996" stroke-width="0.95"/><rect x="1.5" y="15.20" width="0.95" height="3.8" fill="#7e8996"/><ellipse cx="1.9" cy="20.90" rx="1.1" ry="1.75" fill="none" stroke="#7e8996" stroke-width="0.95"/></pattern><pattern id="pb" width="3.85" height="22.799999999999997" patternUnits="userSpaceOnUse" x="0.4" y="0"><rect width="3.85" height="22.799999999999997" fill="#2e3640"/><ellipse cx="1.9" cy="1.90" rx="1.1" ry="1.75" fill="none" stroke="#d0d8e0" stroke-width="0.95"/><rect x="1.5" y="3.80" width="0.95" height="3.8" fill="#d0d8e0"/><ellipse cx="1.9" cy="9.50" rx="1.1" ry="1.75" fill="none" stroke="#d0d8e0" stroke-width="0.95"/><ellipse cx="1.9" cy="13.30" rx="1.1" ry="1.75" fill="none" stroke="#d0d8e0" stroke-width="0.95"/><rect x="1.5" y="15.20" width="0.95" height="3.8" fill="#d0d8e0"/><ellipse cx="1.9" cy="20.90" rx="1.1" ry="1.75" fill="none" stroke="#d0d8e0" stroke-width="0.95"/></pattern>
<linearGradient id="gfade" x1="0" y1="0" x2="0.3" y2="1"><stop offset="0" stop-color="#2c3541" stop-opacity="0"/><stop offset="0.55" stop-color="#2c3541" stop-opacity="0.05"/><stop offset="0.85" stop-color="#2c3541" stop-opacity="0.15"/></linearGradient></defs>
<rect width="123" height="229" fill="url(#pd)"/>
<polygon points="0.0,134.0 8.0,137.0 14.0,150.0 18.0,167.0 33.0,169.0 58.0,175.0 78.0,185.0 103.0,198.0 124.0,206.0 124.0,220.0 98.0,210.0 68.0,193.0 38.0,180.0 18.0,176.0 0.0,168.0" fill="url(#pm)"/>
<polygon points="0.0,52.0 4.0,44.0 9.0,36.0 17.0,29.0 25.0,23.0 32.0,19.0 38.0,17.0 44.0,18.0 51.0,25.0 59.0,38.0 67.0,54.0 73.0,69.0 77.0,81.0 79.0,89.0 124.0,89.0 124.0,206.0 103.0,198.0 78.0,185.0 58.0,176.0 36.0,170.0 18.0,167.0 14.0,150.0 8.0,138.0 0.0,134.0" fill="url(#pb)"/>
<polygon points="0.0,52.0 4.0,44.0 9.0,36.0 17.0,29.0 25.0,23.0 32.0,19.0 38.0,17.0 44.0,18.0 51.0,25.0 59.0,38.0 67.0,54.0 73.0,69.0 77.0,81.0 79.0,89.0 124.0,89.0 124.0,206.0 103.0,198.0 78.0,185.0 58.0,176.0 36.0,170.0 18.0,167.0 14.0,150.0 8.0,138.0 0.0,134.0" fill="url(#gfade)"/>
</svg></div>
  <div class="abs" style="left:124px;top:216px;right:0;bottom:0;background:#d6d6d6"></div>
  <div class="abs" style="left:136.0px;top:30.0px;white-space:nowrap;line-height:12px;font-size:8.6px;letter-spacing:0.610px;font-weight:bold;color:#222">Welcome to the Wizard Installer</div>
  <div class="abs" style="left:155.0px;top:49.0px;white-space:nowrap;line-height:12px;font-size:8.6px;letter-spacing:0.232px;">Today, you will be installing the following application:</div>
  <svg class="abs" style="left:237px;top:75px" width="49" height="31"><rect x="0.75" y="0.75" width="47.5" height="29.5" fill="#f2f2f2" stroke="#6a6258" stroke-width="1.5"/><rect x="1.5" y="1.5" width="46" height="4" fill="#b8ada0"/><rect x="3" y="2.3" width="7" height="2" fill="#333"/><path d="M2 9H47M2 12H47M2 15H47M2 18H47M2 21H47M2 24H47M2 27H47" stroke="#d4d4d4" stroke-width="0.8"/><path d="M11 6V29M24 6V29M37 6V29" stroke="#ddd" stroke-width="0.8"/></svg>
  <div class="abs" style="left:199.0px;top:111.0px;white-space:nowrap;line-height:12px;font-size:8.6px;letter-spacing:0.232px;">DDOS Attacker (custom version)</div>
  <div class="abs" style="left:155.0px;top:136.0px;white-space:nowrap;line-height:12px;font-size:8.6px;letter-spacing:0.239px;">Before starting, please review the following requirements:</div>
  <div class="abs" style="left:168px;top:162px;width:10px;height:10px;border:1px solid #444;background:#888;box-shadow:inset 0 0 0 1px #ccc"><div style="position:absolute;left:2px;top:2px;width:4px;height:4px;background:#333"></div></div>
  <div class="abs" style="left:168px;top:174.5px;width:10px;height:10px;border:1px solid #444;background:#888;box-shadow:inset 0 0 0 1px #ccc"><div style="position:absolute;left:2px;top:2px;width:4px;height:4px;background:#666"></div></div>
  <div class="abs" style="left:168px;top:187px;width:10px;height:10px;border:1px solid #444;background:#f0f0f0;box-shadow:inset 0 0 0 1px #ccc"></div>
  <div class="abs" style="left:186.5px;top:161.0px;white-space:nowrap;line-height:12px;font-size:8.6px;letter-spacing:0.334px;">I have read and accept the terms and conditions</div>
  <div class="abs" style="left:186.5px;top:174.0px;white-space:nowrap;line-height:12px;font-size:8.6px;letter-spacing:0.341px;">Share my data (to help us improve our application)</div>
  <div class="abs" style="left:186.5px;top:186.4px;white-space:nowrap;line-height:12px;font-size:8.6px;letter-spacing:0.305px;">Subscribe to our newsletter</div>
  <svg class="abs" style="left:172px;top:178.5px" width="12" height="15"><path d="M3.5 1.2 Q4.5 0.3 5.5 1.2 V6.5 H8.5 Q10.8 7 10.8 9 V12.2 Q10.3 14 8.5 14 H5.2 Q4 13.6 2.8 11.8 L1 8.8 Q0.9 7.6 2.2 8 L3.5 9.2 Z" fill="#fafafa" stroke="#333" stroke-width="0.9"/><path d="M6 10H9.5M6 11.8H9.5" stroke="#555" stroke-width="0.7"/></svg>
  <div class="btn" style="left:139px;top:226px;width:60px;height:15px">Cancel</div>
  <div class="btn" style="left:324px;top:226px;width:60px;height:15px;background:#8c8c8c;color:#555;border-color:#555;box-shadow:inset 0 0 0 1px #a8a8a8">Next</div>
</div>

<div class="abs" style="left:819px;top:294px;width:1px;height:152px;background:#505050"></div>
<!-- taskbar -->
<div class="abs" style="left:0;top:639px;width:1200px;height:36px;background:#262626;border-top:1px solid #c8c8c8"></div>
<svg class="abs" style="left:18px;top:646px" width="21" height="21"><path d="M1 2.5 Q1 1 2.5 1 H5 Q6 1 6.5 2.5 H14.5 Q15 1 16 1 H18.5 Q20 1 20 2.5 V5 Q20 6 19 6.5 V11 Q19 13 17.5 13.5 H14 V18.5 Q14 20 12.5 20 H8.5 Q7 20 7 18.5 V13.5 H3.5 Q2 13 2 11 V6.5 Q1 6 1 5 Z" fill="#f0f0f0"/><circle cx="3.5" cy="3.5" r="0.9" fill="#999"/><circle cx="17.5" cy="3.5" r="0.9" fill="#999"/><path d="M5.5 9.5 Q6.5 8 8 9.5 M13 9.5 Q14.5 8 15.5 9.5" stroke="#444" stroke-width="1.2" fill="none"/><circle cx="10.5" cy="15.5" r="1.2" fill="#222"/><path d="M9 18.5H12" stroke="#bbb" stroke-width="0.8"/></svg>
<div class="abs" style="left:56px;top:645px;width:183px;height:25px;background:#5a5a5a;border:2px solid #484848;color:#383838;font-size:8.6px;letter-spacing:0.35px;line-height:21px;padding-left:10px">Press TAB to search</div>
<div class="abs" style="left:250px;top:640px;width:40px;height:35px;background:#3c3c3c"></div>
<svg class="abs" style="left:258.5px;top:649px" width="23" height="16"><rect x="0.5" y="0.5" width="22" height="15" fill="#e8e8e8" stroke="#aaa"/><rect x="3" y="3" width="17" height="2.5" fill="#ccc"/><rect x="5" y="8" width="6" height="1" fill="#ccc"/><rect x="3" y="11.5" width="11" height="1.5" fill="#3aa860"/><rect x="14" y="11.5" width="6" height="1.5" fill="#bbb"/></svg>
<svg class="abs" style="left:300.5px;top:648px" width="22" height="18"><path d="M0.5 1.5H3.5V13H20" stroke="#eee" stroke-width="1.3" fill="none"/><rect x="4.5" y="2.5" width="15.5" height="9" fill="#9a9a9a" stroke="#ddd"/><rect x="6.5" y="5" width="11" height="3" fill="#c8c8c8"/><circle cx="6" cy="15.8" r="1.8" fill="#bbb"/><circle cx="17" cy="15.8" r="1.8" fill="#bbb"/></svg>
<svg class="abs" style="left:342.5px;top:648px" width="24" height="18"><path d="M3 2.5 L5 0.5 H9 L10 2.5 H23 V14.5 L20.5 17.5 Z" fill="#9a9a88" stroke="#666" stroke-width="0.8"/><path d="M0.5 5 H21 V17.5 H0.5 Z" fill="#f0e4a8" stroke="#888" stroke-width="0.8"/><path d="M21 17.5 L23.5 14.5 V3" stroke="#888" fill="none"/></svg>
<svg class="abs" style="left:384px;top:649px" width="23" height="16"><rect x="0.5" y="0.5" width="22" height="15" fill="#7ea2d0" stroke="#aab"/><rect x="6" y="6" width="3" height="3" fill="none" stroke="#e4e8f0" stroke-width="0.9"/><rect x="10" y="9.5" width="3" height="3" fill="none" stroke="#e4e8f0" stroke-width="0.9"/><rect x="14.5" y="4" width="3" height="3" fill="none" stroke="#e4e8f0" stroke-width="0.9"/></svg>
<svg class="abs" style="left:426px;top:648px" width="24" height="18"><path d="M3 2.5 L5 0.5 H9 L10 2.5 H23 V14.5 L20.5 17.5 Z" fill="#9a9a88" stroke="#666" stroke-width="0.8"/><path d="M0.5 5 H21 V17.5 H0.5 Z" fill="#f0e4a8" stroke="#888" stroke-width="0.8"/><path d="M21 17.5 L23.5 14.5 V3" stroke="#888" fill="none"/></svg>
<svg class="abs" style="left:467px;top:648px" width="24" height="17"><rect x="0.75" y="0.75" width="22.5" height="15.5" fill="#eee" stroke="#888" stroke-width="1.5"/><rect x="1.5" y="1.5" width="21" height="2" fill="#999"/><text x="12" y="12" text-anchor="middle" font-family="Liberation Mono" font-size="7" fill="#777">xxxx</text></svg>
<svg class="abs" style="left:510.5px;top:650px" width="21" height="13"><rect x="0.75" y="0.75" width="19.5" height="11.5" fill="#c0bcc8" stroke="#999" stroke-width="1.5"/><path d="M2 10L7 4L10 7L14 3L19 10Z" fill="#d4b8a8"/></svg>
<svg class="abs" style="left:551.5px;top:649px" width="24" height="16"><rect x="0.75" y="0.75" width="22.5" height="14.5" fill="#555" stroke="#999" stroke-width="1.5"/><rect x="3" y="3" width="1" height="1" fill="#aaa"/></svg>
<svg class="abs" style="left:593px;top:648px" width="24" height="18"><path d="M3 2.5 L5 0.5 H9 L10 2.5 H23 V14.5 L20.5 17.5 Z" fill="#9a9a88" stroke="#666" stroke-width="0.8"/><path d="M0.5 5 H21 V17.5 H0.5 Z" fill="#f0e4a8" stroke="#888" stroke-width="0.8"/><path d="M21 17.5 L23.5 14.5 V3" stroke="#888" fill="none"/></svg>
<svg class="abs" style="left:918px;top:651px" width="12" height="12"><path d="M0.7 11.3H11.3V7.7H9.3V1H7V3.8H5V6.3H2.8V8.7H0.7Z" fill="#555" stroke="#bbb" stroke-width="1"/><path d="M2.8 8.7V11.3M5 6.3V11.3M7 3.8V11.3M9.3 7.7V11.3" stroke="#bbb" stroke-width="0.8"/></svg><svg class="abs" style="left:940px;top:651px" width="10" height="12"><path d="M1 1H9V8L5 11L1 8Z" fill="#777" stroke="#b8b8b8"/><path d="M3 3H7V7.5L5 9L3 7.5Z" fill="#333"/></svg><svg class="abs" style="left:957px;top:652px" width="14" height="11"><rect x="0.6" y="1.6" width="12.8" height="8.8" rx="1" fill="#666" stroke="#aaa" stroke-width="1.2"/><path d="M2.5 4H11.5M2.5 6H11.5M2.5 8H11.5" stroke="#c4c4c4" stroke-width="1" stroke-dasharray="1 1"/></svg><svg class="abs" style="left:977px;top:652px" width="14" height="11"><rect x="0.75" y="0.75" width="12.5" height="9.5" fill="#444" stroke="#b8b8b8" stroke-width="1.5"/><path d="M3 3L11 8" stroke="#aaa"/></svg><svg class="abs" style="left:1000px;top:651px" width="9" height="12"><path d="M1 9.5L4.5 6M4 11L8 7M5 5L8 1.5M1.5 8L6 3" stroke="#b8b8b8" stroke-width="1.3"/></svg><svg class="abs" style="left:1017px;top:653px" width="14" height="10"><rect x="0.75" y="0.75" width="12.5" height="8.5" fill="#333" stroke="#b8b8b8" stroke-width="1.3"/><path d="M2 7.5L7 2.5L12 7.5Z" fill="#999"/></svg><svg class="abs" style="left:1039px;top:651px" width="10" height="12"><rect x="0.75" y="1.5" width="8.5" height="10" fill="#555" stroke="#b8b8b8" stroke-width="1.3"/><rect x="3" y="0" width="4" height="2.5" fill="#b8b8b8"/></svg><svg class="abs" style="left:1057px;top:652px" width="14" height="11"><rect x="0.75" y="0.75" width="12.5" height="9.5" fill="#444" stroke="#b8b8b8" stroke-width="1.3"/><path d="M3 3H6V5H4V8M8 3H11L9 6L11 8" stroke="#ddd" stroke-width="1.2" fill="none"/></svg><svg class="abs" style="left:1077px;top:651px" width="14" height="11"><rect x="2.5" y="1" width="11" height="7" fill="#666" stroke="#b8b8b8"/><rect x="0.5" y="3" width="3" height="4" fill="#777" stroke="#b8b8b8" stroke-width="0.8"/><rect x="5" y="3" width="6" height="3" fill="#333"/><path d="M6 9.5H10" stroke="#b8b8b8" stroke-width="1.2"/></svg><svg class="abs" style="left:1097px;top:650px" width="14" height="13"><rect x="3.75" y="0.75" width="6.5" height="11.5" rx="0.8" fill="#555" stroke="#b8b8b8" stroke-width="1.3"/><path d="M1 4V9M13 4V9" stroke="#999" stroke-dasharray="1 1"/></svg>
<div class="abs" style="left:1120px;top:647px;width:63px;text-align:center;color:#e0e0e0;font-size:8.6px;letter-spacing:0.35px;line-height:10.5px">23 April<br>Sunday</div>
</body></html>
